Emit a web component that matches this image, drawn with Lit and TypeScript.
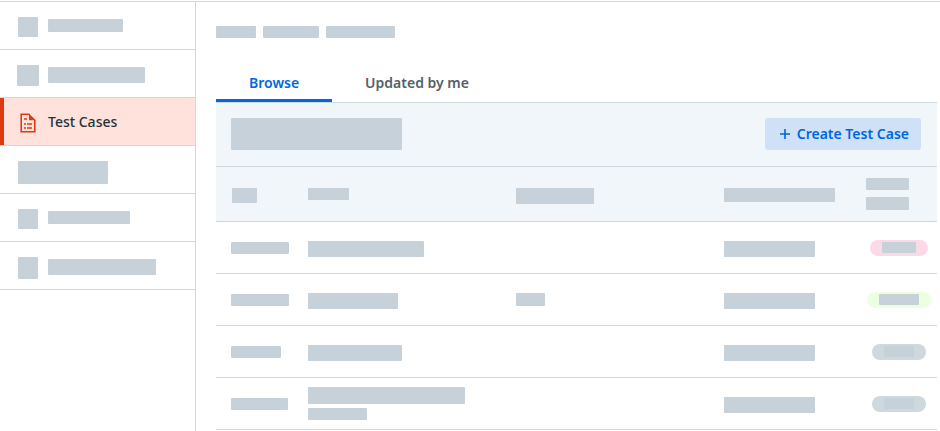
import { LitElement, html, css, nothing } from "lit";
import { customElement, property } from "lit/decorators.js";

type Size = [width: number, height: number];

interface NavItem {
  icon?: Size;
  bar?: Size;
  label?: string;
}

interface Row {
  id: number;
  name: Size[];
  owner?: Size;
  updated: number;
  status: number;
  tone: "pink" | "green" | "gray";
}

const NAV: NavItem[] = [
  { icon: [20, 20], bar: [75, 13] },
  { icon: [22, 21], bar: [97, 16] },
  { label: "Test Cases" },
  { icon: [90, 23] },
  { icon: [20, 20], bar: [82, 13] },
  { icon: [20, 22], bar: [108, 16] },
];

const ROWS: Row[] = [
  { id: 58, name: [[116, 16]], updated: 91, status: 34, tone: "pink" },
  { id: 58, name: [[90, 16]], owner: [29, 13], updated: 91, status: 40, tone: "green" },
  { id: 50, name: [[94, 16]], updated: 91, status: 30, tone: "gray" },
  { id: 57, name: [[157, 17], [59, 12]], updated: 91, status: 30, tone: "gray" },
];

/** A placeholder block. */
@customElement("skeleton-bar")
export class SkeletonBar extends LitElement {
  @property({ type: Array }) size: Size = [40, 12];

  static styles = css`
    :host {
      display: block;
      flex: none;
    }
    .block {
      background: #c7d1da;
      border-radius: 1px;
    }
  `;

  render() {
    const [w, h] = this.size;
    return html`<div class="block" style="width:${w}px;height:${h}px"></div>`;
  }
}

const bar = (size: Size) => html`<skeleton-bar .size=${size}></skeleton-bar>`;

@customElement("app-sidebar")
export class AppSidebar extends LitElement {
  static styles = css`
    :host {
      display: block;
      box-sizing: border-box;
      border-right: 1px solid #cfd8dc;
    }
    .list {
      list-style: none;
      margin: 0;
      padding: 0;
    }
    .item {
      box-sizing: border-box;
      height: 48px;
      border-bottom: 1px solid #cfd8dc;
    }
    .row {
      display: flex;
      align-items: flex-start;
      gap: 10px;
      box-sizing: border-box;
      height: 47px;
      padding: 15px 18px 0;
    }
    .slot {
      display: flex;
      justify-content: center;
      flex: none;
      width: 20px;
    }
    .text {
      padding-top: 2px;
    }
    .active {
      align-items: center;
      padding: 0 18px 0 14px;
      border-left: 4px solid #de3a11;
      background: #ffe2dc;
      color: #263238;
      font-weight: 500;
      line-height: 20px;
      text-decoration: none;
    }
    .icon {
      display: block;
      margin-top: 3px;
    }
  `;

  private renderItem(item: NavItem) {
    if (item.label) {
      return html`<a class="row active" href="#test-cases" aria-current="page">
        <span class="slot">
          <svg class="icon" width="16" height="20" viewBox="0 0 16 20" aria-hidden="true">
            <path d="M9.5 1.2H1.2v17.6h13.6V7" fill="none" stroke="#de3a11" stroke-width="1.6" />
            <path d="M9 0.4l6.8 6.8H9z" fill="#de3a11" />
            <path d="M4 5.2h3v1.6H4zM4 10.2h2v1.6H4zM7 10.2h5v1.6H7zM4 14.2h2v1.6H4zM7 14.2h5v1.6H7z" fill="#de3a11" />
          </svg>
        </span>
        <span>${item.label}</span>
      </a>`;
    }
    if (!item.bar) return html`<div class="row">${bar(item.icon!)}</div>`;
    return html`<div class="row">
      <span class="slot">${bar(item.icon!)}</span>
      <span class="text">${bar(item.bar)}</span>
    </div>`;
  }

  render() {
    return html`<nav>
      <ul class="list">
        ${NAV.map((i) => html`<li class="item">${this.renderItem(i)}</li>`)}
      </ul>
    </nav>`;
  }
}

@customElement("case-table")
export class CaseTable extends LitElement {
  static styles = css`
    :host {
      display: block;
    }
    .table {
      width: 100%;
      table-layout: fixed;
      border-collapse: separate;
      border-spacing: 0;
    }
    .id-col,
    .status-col {
      width: 76px;
    }
    .updated-col {
      width: 153px;
    }
    .table th,
    .table td {
      box-sizing: border-box;
      padding: 0 0 0 16px;
      vertical-align: top;
      border-bottom: 1px solid #cfd8dc;
    }
    .table th {
      height: 55px;
      padding-top: 21px;
      background: #f0f6f9;
    }
    .table td {
      height: 52px;
      padding-top: 19px;
    }
    .table td.id {
      padding-top: 20px;
      padding-left: 15px;
    }
    .table td.double {
      padding-top: 9px;
    }
    .table th.status {
      padding-top: 11px;
      padding-left: 5px;
    }
    .table td.status {
      padding-top: 18px;
      padding-left: 0;
    }
    .stack {
      display: flex;
      flex-direction: column;
      gap: 4px;
    }
    .stack.wide {
      gap: 7px;
    }
    .pill {
      display: flex;
      box-sizing: border-box;
      width: fit-content;
      height: 16px;
      margin: 0 auto;
      padding: 2px 12px;
      border-radius: 8px;
    }
    .pink {
      background: #fcd9e6;
    }
    .green {
      background: #edffe1;
    }
    .gray {
      background: #cfd8dc;
    }
  `;

  render() {
    return html`<table class="table">
      <colgroup>
        <col class="id-col" />
        <col />
        <col />
        <col class="updated-col" />
        <col class="status-col" />
      </colgroup>
      <thead>
        <tr>
          <th>${bar([25, 15])}</th>
          <th>${bar([41, 12])}</th>
          <th>${bar([78, 16])}</th>
          <th>${bar([111, 14])}</th>
          <th class="status">
            <div class="stack wide">${bar([43, 12])}${bar([43, 13])}</div>
          </th>
        </tr>
      </thead>
      <tbody>
        ${ROWS.map(
          (r) => html`<tr>
            <td class="id">${bar([r.id, 12])}</td>
            <td class=${r.name.length > 1 ? "double" : "single"}>
              <div class="stack">${r.name.map(bar)}</div>
            </td>
            <td>${r.owner ? bar(r.owner) : nothing}</td>
            <td>${bar([r.updated, 16])}</td>
            <td class="status">
              <div class="pill ${r.tone}">${bar([r.status, 11])}</div>
            </td>
          </tr>`
        )}
      </tbody>
    </table>`;
  }
}

@customElement("app-root")
export class AppRoot extends LitElement {
  static styles = css`
    :host {
      display: grid;
      grid-template-columns: 196px minmax(0, 1fr);
      box-sizing: border-box;
      min-height: 100vh;
      padding-top: 1px;
      background: linear-gradient(#cfd8dc, #cfd8dc) 0 1px / 100% 1px no-repeat #fff;
      font: 14px "Noto Sans", "Open Sans", sans-serif;
    }
    .side {
      margin-top: 1px;
    }
    .main {
      padding: 25px 3px 0 20px;
    }
    .crumbs {
      display: flex;
      gap: 7px;
    }
    .tabs {
      display: flex;
      margin-top: 26px;
      border-bottom: 1px solid #cfd8dc;
    }
    .tab {
      box-sizing: border-box;
      height: 38px;
      padding: 2px 33px 0;
      border: 0;
      border-bottom: 3px solid transparent;
      background: none;
      color: #546069;
      font: 600 14px/20px "Noto Sans", "Open Sans", sans-serif;
    }
    .tab.selected {
      border-bottom-color: #0067e0;
      color: #0067e0;
    }
    .toolbar {
      display: flex;
      align-items: center;
      justify-content: space-between;
      padding: 15px 16px 16px 15px;
      border-bottom: 1px solid #cfd8dc;
      background: #f0f6f9;
    }
    .create {
      display: flex;
      align-items: center;
      gap: 7px;
      height: 32px;
      padding: 0 12px 0 15px;
      border: 0;
      border-radius: 3px;
      background: #cfe1f7;
      color: #0067e0;
      font: 600 14px/20px "Noto Sans", "Open Sans", sans-serif;
    }
  `;

  render() {
    return html`
      <app-sidebar class="side"></app-sidebar>
      <main class="main">
        <div class="crumbs">${bar([40, 12])}${bar([56, 12])}${bar([69, 12])}</div>
        <div class="tabs" role="tablist">
          <button class="tab selected" role="tab" aria-selected="true">Browse</button>
          <button class="tab" role="tab" aria-selected="false">Updated by me</button>
        </div>
        <div class="toolbar">
          ${bar([171, 32])}
          <button class="create">
            <svg width="10" height="10" viewBox="0 0 10 10" aria-hidden="true">
              <path d="M5 0v10M0 5h10" fill="none" stroke="currentColor" stroke-width="1.6" />
            </svg>
            Create Test Case
          </button>
        </div>
        <case-table></case-table>
      </main>
    `;
  }
}
